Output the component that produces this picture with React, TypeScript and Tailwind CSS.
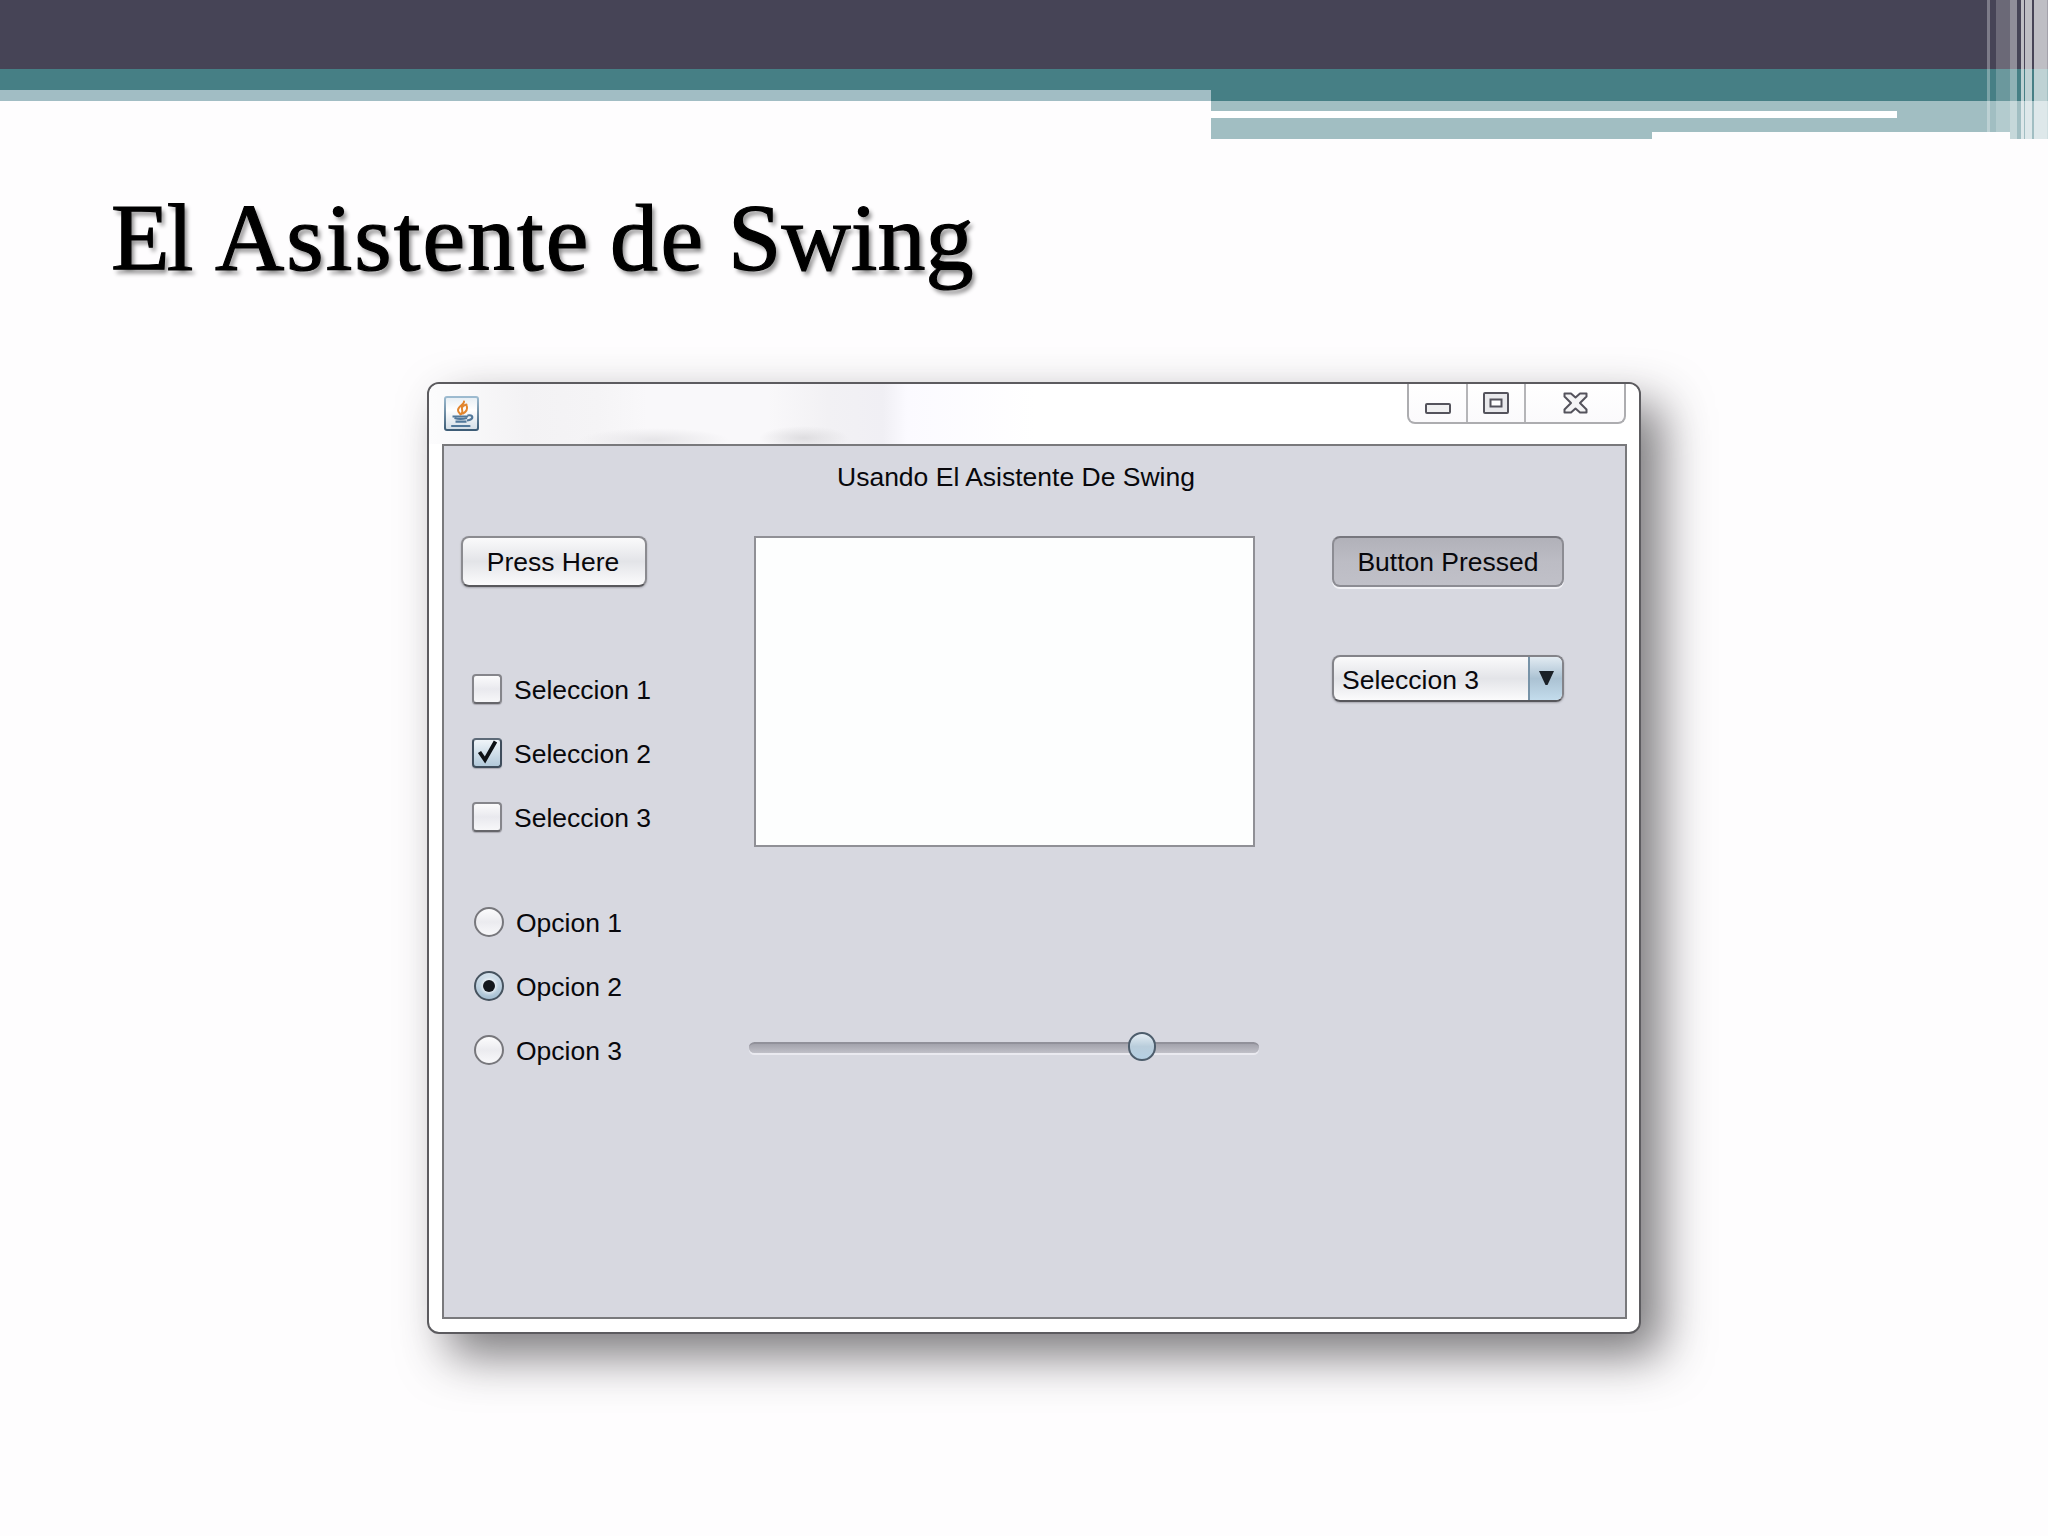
import { useState } from "react";
import clsx from "clsx";

// Vertical light strips at the right end of the banner
const strips = [
  { id: 1, className: "w-[3px] h-[132px] bg-white/30" },
  { id: 2, className: "w-[6px] h-[132px]" },
  { id: 3, className: "w-[14px] h-[132px] bg-white/20" },
  { id: 4, className: "w-[7px] h-[139px] bg-white/40" },
  { id: 5, className: "w-[4px] h-[139px]" },
  { id: 6, className: "w-[3px] h-[139px] bg-white/65" },
  { id: 7, className: "w-[1px] h-[139px]" },
  { id: 8, className: "w-[7px] h-[139px] bg-white/65" },
  { id: 9, className: "w-[2px] h-[139px]" },
  { id: 10, className: "w-[13px] h-[139px] bg-white/65" },
  { id: 11, className: "w-[1px] h-[139px] bg-white/50" },
];

const selections = ["Seleccion 1", "Seleccion 2", "Seleccion 3"];
const options = ["Opcion 1", "Opcion 2", "Opcion 3"];

function Banner() {
  return (
    <header className="relative h-[139px] w-full">
      <div className="h-[69px] bg-[#464456]" />
      <div className="flex">
        <div className="w-[1211px]">
          <div className="h-[21px] bg-[#467f85]" />
          <div className="h-[11px] bg-[#a1bdc4]" />
        </div>
        <div className="flex-1">
          <div className="h-8 bg-[#467f85]" />
          <div className="h-2.5 bg-[#a1bec2]" />
          <div className="flex h-[7px]">
            <div className="w-[686px] bg-white" />
            <div className="flex-1 bg-[#a1bec2]" />
          </div>
          <div className="h-3.5 bg-[#a1bec2]" />
          <div className="flex h-[7px] justify-between">
            <div className="w-[441px] bg-[#a1bec2]" />
            <div className="w-[38px] bg-[#a1bec2]" />
          </div>
        </div>
      </div>
      <div className="absolute right-0 top-0 flex">
        {strips.map((strip) => (
          <div key={strip.id} className={strip.className} />
        ))}
      </div>
    </header>
  );
}

function JavaIcon() {
  return (
    <svg width="35" height="35" viewBox="0 0 35 35" fill="none">
      <defs>
        <linearGradient id="java-bg" x1="0" y1="0" x2="0" y2="1">
          <stop offset="0" stopColor="#e6eef4" />
          <stop offset="0.4" stopColor="#ffffff" />
          <stop offset="1" stopColor="#d3dde6" />
        </linearGradient>
        <linearGradient id="java-edge" x1="0" y1="0" x2="0" y2="1">
          <stop offset="0" stopColor="#9dbbd0" />
          <stop offset="1" stopColor="#3d5c76" />
        </linearGradient>
      </defs>
      <rect x="1" y="1" width="33" height="33" rx="2" fill="url(#java-bg)" stroke="url(#java-edge)" strokeWidth="2" />
      <path d="M20 5.500c.5 3-6 4.500-6 8.500 0 2.500 2 3 2.500 4.500M22.500 8.500c-3.500 1-5 3-4.500 4.800.4 1.500 1 2.500-.5 4.700M22.800 10c1 3.500-1 6-3.800 7.500" stroke="#e2862f" strokeWidth="2" strokeLinecap="round" />
      <path d="M8.500 20.500h15.500M23.500 19.500c6-1.500 7 4-.5 5" stroke="#52789a" strokeWidth="2.200" />
      <path d="M10.500 22c3 1 9 1 12.500 0M11.500 25.700h11" stroke="#52789a" strokeWidth="2.300" />
      <path d="M8 30h17.500" stroke="#52789a" strokeWidth="2.200" strokeLinecap="round" />
    </svg>
  );
}

function WindowControls() {
  return (
    <div className="ml-auto mr-[13px] flex h-10 w-[219px] rounded-b-lg border-2 border-t-0 border-[#adadb0] bg-gradient-to-b from-white to-[#fbfafc]">
      <div className="flex w-[59px] items-start justify-center border-r-2 border-[#b5b5b8] pt-[19px]">
        <svg width="26" height="11" viewBox="0 0 26 11">
          <rect x="1" y="1" width="24" height="9" rx="1" fill="#f0f0f1" stroke="#54535c" strokeWidth="2" />
        </svg>
      </div>
      <div className="flex w-[58px] items-start justify-center border-r-2 border-[#b5b5b8] pt-2">
        <svg width="26" height="22" viewBox="0 0 26 22">
          <rect x="1" y="1" width="24" height="20" rx="1" fill="#e9e9ec" stroke="#54535c" strokeWidth="2" />
          <rect x="7.500" y="7.500" width="11" height="7" fill="#fff" stroke="#54535c" strokeWidth="2" />
        </svg>
      </div>
      <div className="flex flex-1 items-start justify-center pt-2">
        <svg width="25" height="22" viewBox="0 0 25 22">
          <path
            d="M1.500 1.500h6.500l4.500 4 4.500-4h6.500v3l-6.500 6.500 6.500 6.500v3h-6.500l-4.500-4-4.500 4h-6.500v-3l6.500-6.500-6.500-6.500z"
            fill="#f4f4f5"
            stroke="#54535c"
            strokeWidth="2"
            strokeLinejoin="round"
          />
        </svg>
      </div>
    </div>
  );
}

function CheckBox({ label, checked, onClick }: {
  label: string;
  checked: boolean;
  onClick: () => void;
}) {
  return (
    <button className="flex h-[30px] items-center" onClick={onClick}>
      <span
        className={clsx(
          "flex size-[30px] items-center justify-center rounded-[4px] border-2 shadow-[0_1px_1px_#aaaab2]",
          checked
            ? "border-[#3f4d5c] border-t-[#5d6a78] bg-gradient-to-b from-[#f0f5f9] to-[#b2c9da]"
            : "border-[#85858b] border-b-[#66666b] bg-gradient-to-b from-[#fbfbfc] via-[#e9e9ee] to-[#f7f7f9]"
        )}
      >
        {checked && (
          <svg width="22" height="26" viewBox="0 0 22 26" fill="none">
            <path d="M3.500 12L9 20L19.500 1.500" stroke="#0d1115" strokeWidth="3.800" />
          </svg>
        )}
      </span>
      <span className="ml-3 pt-0.5">{label}</span>
    </button>
  );
}

function RadioButton({ label, checked, onClick }: {
  label: string;
  checked: boolean;
  onClick: () => void;
}) {
  return (
    <button className="flex h-[30px] items-center" onClick={onClick}>
      <span
        className={clsx(
          "flex size-[30px] items-center justify-center rounded-full border-2",
          checked
            ? "border-[#46535f] bg-gradient-to-b from-[#d5e2ec] to-[#a6c0d3]"
            : "border-[#77777c] bg-gradient-to-b from-[#fcfcfd] via-[#ebebef] to-[#f8f8fa]"
        )}
      >
        {checked && <span className="size-3 rounded-full bg-[#14181d] shadow-[0_0_3px_2px_#ffffff90]" />}
      </span>
      <span className="ml-3 pt-0.5">{label}</span>
    </button>
  );
}

function Slider({ value }: { value: number }) {
  return (
    <div className="relative -ml-[5px] -mr-1 flex h-[30px] items-center">
      <div className="h-[11px] w-full rounded-full border-t-2 border-[#91919a] bg-gradient-to-b from-[#a3a3ac] to-[#c0c0c8] shadow-[0_2px_0_#eaeaf0]" />
      <div
        className="absolute top-0 h-[29px] w-7 rounded-full border-2 border-[#4d5d6c] bg-gradient-to-b from-[#e4edf4] via-[#b9cddb] to-[#b5d0e3]"
        style={{ left: `${value}%` }}
      />
    </div>
  );
}

function SwingWindow() {
  const [checked, setChecked] = useState<string[]>(["Seleccion 2"]);
  const [option, setOption] = useState("Opcion 2");

  const toggle = (name: string) =>
    setChecked(checked.includes(name) ? checked.filter((c) => c !== name) : [...checked, name]);

  return (
    <div className="h-[952px] w-[1214px] rounded-[12px] border-2 border-[#5c5b5f] bg-white px-[13px] shadow-[21px_22px_48px_rgba(45,42,46,0.62)]">
      {/* Title bar */}
      <div className="-mx-[13px] flex h-[60px] items-start rounded-t-[10px] bg-[radial-gradient(ellipse_45px_12px_at_375px_54px,#dedde0,transparent),radial-gradient(ellipse_75px_12px_at_225px_56px,#e5e4e7,transparent),linear-gradient(90deg,#fcfcfd_0%,#f3f2f4_8%,#f5f4f6_14%,#f9f8fa_18%,#f9f8fa_28%,#f2f1f4_33%,#f0eff4_37.500%,#fbfaff_39.500%,#ffffff_50%,#ffffff_100%)]">
        <div className="ml-[15px] mt-3">
          <JavaIcon />
        </div>
        <WindowControls />
      </div>

      {/* Client area */}
      <div className="h-[875px] w-[1185px] border-2 border-[#79797c] bg-[#d7d8e0] text-[26.5px] leading-[30px] text-[#08080c]">
        <p className="ml-[393px] mt-4 whitespace-nowrap">Usando El Asistente De Swing</p>

        <div className="mt-11 flex items-start">
          <div className="w-[310px] shrink-0 pl-[17px]">
            <button className="flex h-[51px] w-[186px] items-center justify-center rounded-[8px] border-2 border-[#8b8b90] border-b-[#58585c] bg-gradient-to-b from-[#fafafb] via-[#e3e4e8] to-[#fbfbfc] pr-0.5 shadow-[0_1px_2px_#a5a5ad]">
              Press Here
            </button>
            <div className="ml-[11px] mt-[87px] flex flex-col gap-[34px]">
              {selections.map((name) => (
                <CheckBox key={name} label={name} checked={checked.includes(name)} onClick={() => toggle(name)} />
              ))}
            </div>
            <div className="ml-[13px] mt-[75px] flex flex-col gap-[34px]">
              {options.map((name) => (
                <RadioButton key={name} label={name} checked={option === name} onClick={() => setOption(name)} />
              ))}
            </div>
          </div>

          <div className="w-[501px] shrink-0">
            <div className="mb-[185px] h-[311px] border-2 border-[#909096] bg-[#fdfefe]" />
            <Slider value={74.4} />
          </div>

          <div className="ml-[77px] flex w-[232px] flex-col gap-[68px]">
            <button className="flex h-[51px] items-center justify-center rounded-[8px] border-2 border-[#8c8c93] border-t-[#77777e] bg-gradient-to-b from-[#b1b1b9] via-[#bcbcc4] to-[#c0c0c8] shadow-[0_2px_0_#f2f2f6]">
              Button Pressed
            </button>
            <button className="flex h-[47px] items-stretch overflow-hidden rounded-[8px] border-2 border-[#838389] border-b-[#57575c] bg-gradient-to-b from-[#fafafb] via-[#e3e4e8] to-[#fbfbfc] shadow-[0_1px_2px_#a5a5ad]">
              <span className="flex flex-1 items-center pl-2 pt-0.5">Seleccion 3</span>
              <span className="flex w-[34px] items-center justify-center border-l-2 border-[#7793a8] bg-gradient-to-b from-[#e2ebf2] via-[#abc2d3] to-[#c3dcec] pb-px">
                <svg width="15" height="14" viewBox="0 0 15 14">
                  <path d="M0 0h15l-6.500 14h-2z" fill="#1b2127" />
                </svg>
              </span>
            </button>
          </div>
        </div>
      </div>
    </div>
  );
}

export default function App() {
  return (
    <main className="flex h-[1536px] w-[2048px] flex-col overflow-hidden bg-[#fefdfe] font-['Liberation_Sans',Arial,sans-serif]">
      <Banner />
      <h1 className="ml-[111px] mt-[49px] flex h-[100px] whitespace-nowrap font-['Liberation_Serif',serif] text-[96px] leading-[100px] text-black [-webkit-text-stroke:1.2px_black] [text-shadow:3px_4px_4px_rgba(0,0,0,0.45)]">
        <span className="w-[104px] tracking-[-3px]">El</span>
        <span className="w-[395px] tracking-[2px]">Asistente</span>
        <span className="w-[118px] tracking-[2.5px]">de</span>
        <span>Swing</span>
      </h1>
      <div className="ml-[427px] mt-[94px]">
        <SwingWindow />
      </div>
    </main>
  );
}
